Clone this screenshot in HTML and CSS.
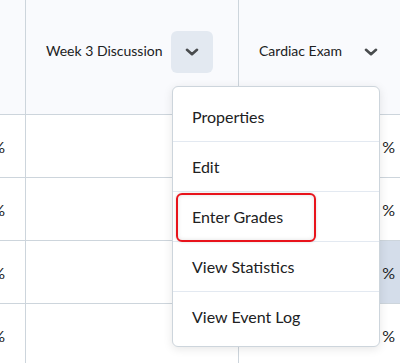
FILE: index.html
```html
<!DOCTYPE html>
<html lang="en">
<head>
<meta charset="utf-8">
<title>Grades</title>
<link rel="stylesheet" href="styles.css">
</head>
<body>
<div class="grid">
  <div class="row header">
    <div class="cell c1"></div>
    <div class="cell c2">
      <span class="title">Week 3 Discussion</span>
      <button class="dd active" aria-label="Actions for Week 3 Discussion">
        <svg viewBox="0 0 14 8" width="14" height="8"><path d="M2 1.8 L7 6.2 L12 1.8" fill="none" stroke="#494c4e" stroke-width="2.6" stroke-linecap="round" stroke-linejoin="round"/></svg>
      </button>
    </div>
    <div class="cell c3">
      <span class="title">Cardiac Exam</span>
      <button class="dd" aria-label="Actions for Cardiac Exam">
        <svg viewBox="0 0 14 8" width="14" height="8"><path d="M2 1.8 L7 6.2 L12 1.8" fill="none" stroke="#494c4e" stroke-width="2.6" stroke-linecap="round" stroke-linejoin="round"/></svg>
      </button>
    </div>
  </div>
  <div class="row">
    <div class="cell c1 num">80 %</div>
    <div class="cell c2"></div>
    <div class="cell c3 num">80 %</div>
  </div>
  <div class="row">
    <div class="cell c1 num">80 %</div>
    <div class="cell c2"></div>
    <div class="cell c3 num">80 %</div>
  </div>
  <div class="row">
    <div class="cell c1 num">80 %</div>
    <div class="cell c2"></div>
    <div class="cell c3 num selected">80&nbsp;&nbsp;%</div>
  </div>
  <div class="row">
    <div class="cell c1 num">80 %</div>
    <div class="cell c2"></div>
    <div class="cell c3 num">80 %</div>
  </div>
</div>

<div class="menu" role="menu">
  <div class="item" role="menuitem">Properties</div>
  <div class="item" role="menuitem">Edit</div>
  <div class="item" role="menuitem">Enter Grades</div>
  <div class="item" role="menuitem">View Statistics</div>
  <div class="item" role="menuitem">View Event Log</div>
  <div class="mark"></div>
</div>
</body>
</html>
```

FILE: styles.css
```css
html, body {
  margin: 0;
  padding: 0;
  overflow: hidden;
  background: #ffffff;
}
body {
  font-family: Lato, "Open Sans", sans-serif;
  color: #202122;
  width: 400px;
  height: 363px;
  position: relative;
}
.grid {
  display: flex;
  flex-direction: column;
}
.row {
  display: flex;
  height: 63px;
  box-sizing: border-box;
  border-bottom: 1px solid #cdd5dc;
  background: #ffffff;
}
.row.header {
  height: 115px;
  background: #f9fafd;
}
.cell {
  box-sizing: border-box;
  border-right: 1px solid #cdd5dc;
  display: flex;
  align-items: center;
  flex: none;
}
.c1 {
  width: 61px;
  margin-left: -35px;
  justify-content: flex-end;
  padding-right: 21px;
}
.c2 {
  width: 213px;
  padding-left: 20px;
}
.c3 {
  width: 161px;
  padding-left: 20px;
  border-right: none;
}
.header .cell {
  padding-bottom: 10px;
}
.title {
  font-size: 14px;
  line-height: 20px;
  margin-right: 8px;
  margin-top: -3px;
  white-space: nowrap;
}
.dd {
  width: 42px;
  height: 42px;
  border: none;
  border-radius: 6px;
  background: transparent;
  display: flex;
  align-items: center;
  justify-content: center;
  padding: 0;
  flex: none;
}
.dd.active {
  background: #e3e9f1;
}
.num {
  font-size: 16px;
  justify-content: flex-end;
  padding-right: 5px;
  white-space: nowrap;
}
.c1.num {
  padding-right: 20px;
}
.selected {
  background: #d4ddea;
}
.menu {
  position: absolute;
  left: 172px;
  top: 86px;
  width: 208px;
  box-sizing: border-box;
  background: #ffffff;
  border: 1px solid #cdd5dc;
  border-radius: 6px;
  padding: 4px 0 5px;
  box-shadow: 0 2px 10px rgba(0, 0, 0, 0.1);
}
.item {
  height: 50px;
  box-sizing: border-box;
  display: flex;
  align-items: center;
  padding-left: 19px;
  font-size: 16px;
  color: #202122;
  border-top: 1px solid #e3e9f1;
}
.item:first-child {
  border-top: none;
}
.mark {
  position: absolute;
  left: 3px;
  top: 106px;
  width: 140px;
  height: 49px;
  box-sizing: border-box;
  border: 2px solid #e8131b;
  border-radius: 6px;
  box-shadow: inset 0 0 4px rgba(0, 0, 0, 0.12), 0 0 3px rgba(0, 0, 0, 0.15);
}
```
